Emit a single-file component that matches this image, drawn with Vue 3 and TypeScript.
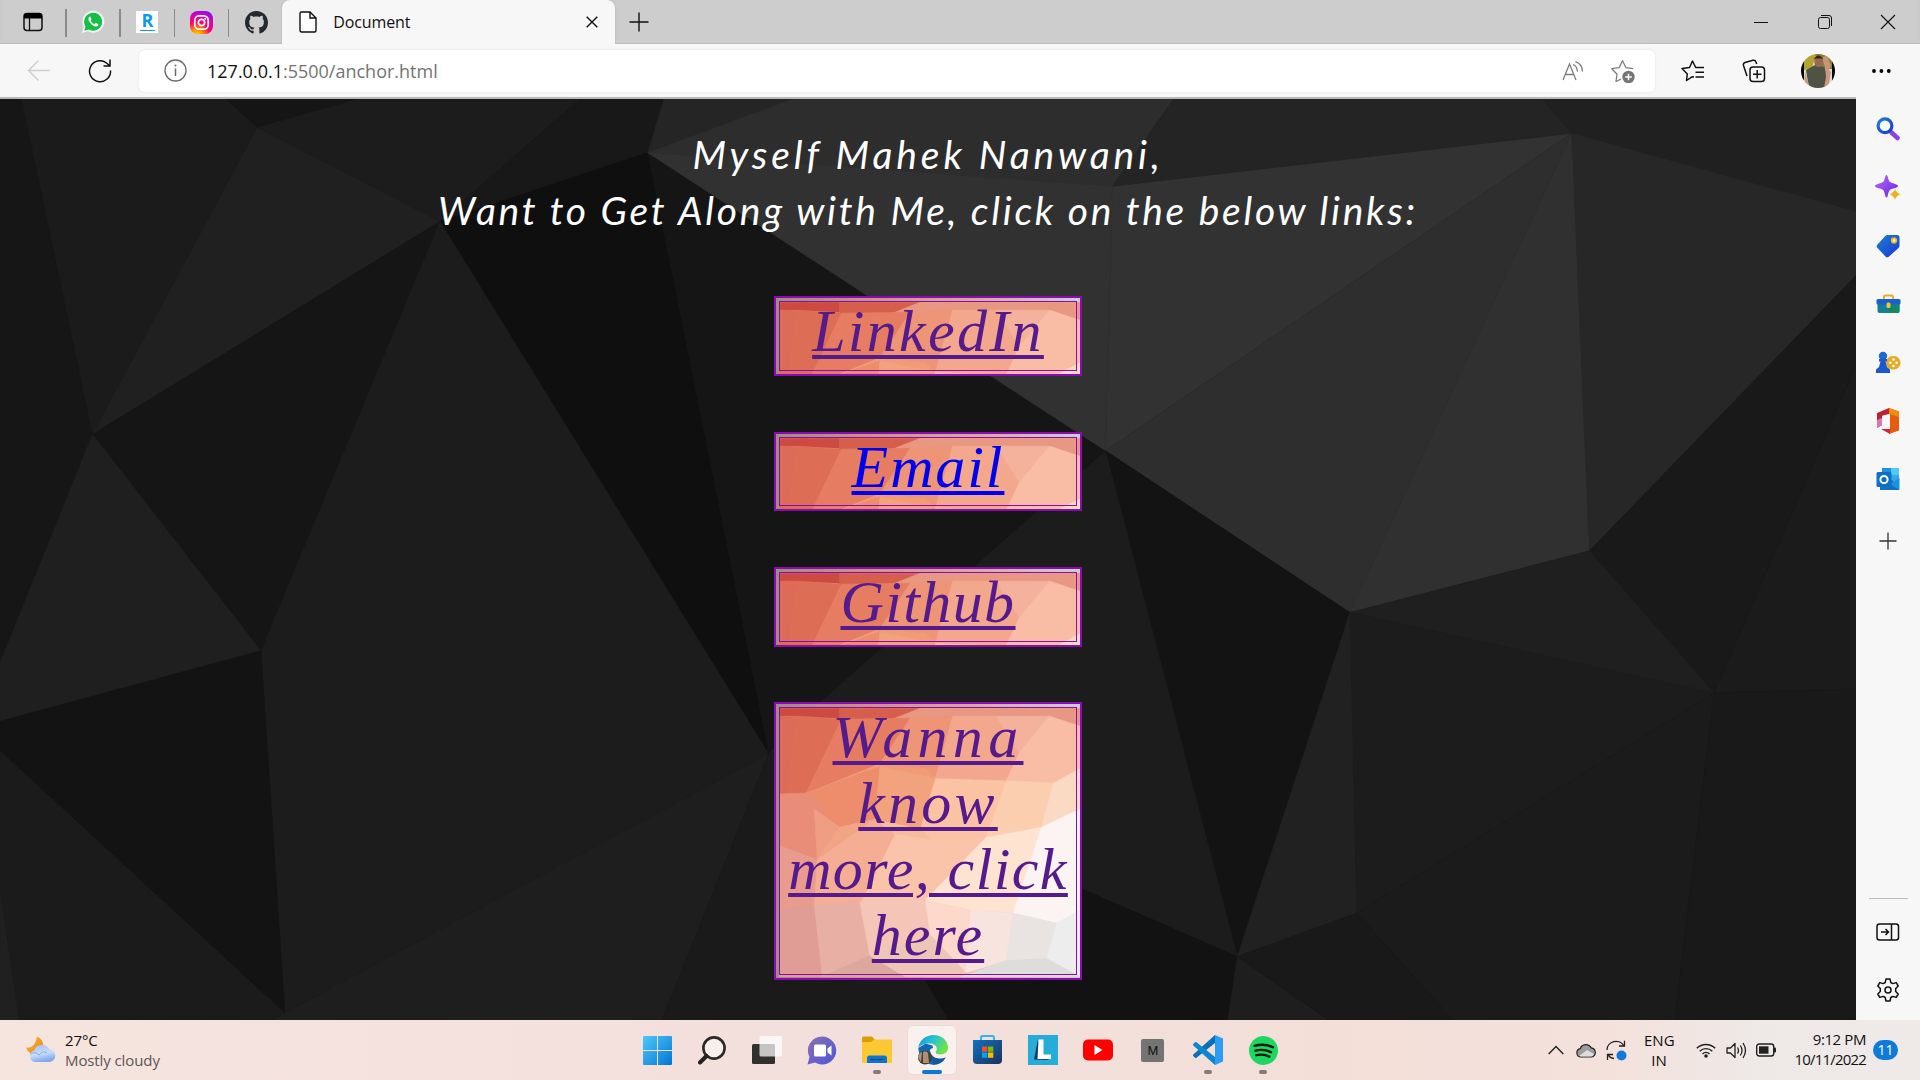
<script setup lang="ts">
interface LinkLine { text: string; spacing: number }
interface LinkCard { id: string; fresh?: boolean; height: number; gap: number; lines: LinkLine[] }

const cards: LinkCard[] = [
  { id: 'linkedin', height: 80, gap: 56, lines: [{ text: 'LinkedIn', spacing: 2.3 }] },
  { id: 'email', fresh: true, height: 79, gap: 56, lines: [{ text: 'Email', spacing: 1.9 }] },
  { id: 'github', height: 80, gap: 55, lines: [{ text: 'Github', spacing: 1.4 }] },
  {
    id: 'more', height: 278, gap: 0, lines: [
      { text: 'Wanna', spacing: 5.3 },
      { text: 'know', spacing: 3.2 },
      { text: 'more, click', spacing: 1.4 },
      { text: 'here', spacing: 2 },
    ],
  },
]

type Facet = [string, string]

const wall: Facet[] = [
  ['0,0 18,0 78,572 0,960', '#161617'],
  ['18,0 190,0 217,50 78,572', '#1b1b1b'],
  ['190,0 305,0 217,50', '#151515'],
  ['217,50 371,210 78,572', '#202020'],
  ['305,0 490,0 371,210 217,50', '#1c1c1c'],
  ['490,0 560,0 546,93 371,210', '#181818'],
  ['371,210 546,93 648,1115', '#0f0f0f'],
  ['371,210 78,572 220,940', '#151515'],
  ['371,210 220,940 240,1556 648,1115', '#1c1c1c'],
  ['78,572 220,940 0,1060 0,960', '#1f1f1f'],
  ['0,1060 220,940 240,1556 0,1110', '#131313'],
  ['0,1110 240,1556 230,1568 16,1568 0,1350', '#1b1b1b'],
  ['0,1350 16,1568 0,1568', '#202020'],
  ['240,1556 648,1115 558,1568 230,1568', '#1e1e1e'],
  ['648,1115 780,1500 800,1568 558,1568', '#1a1a1a'],
  ['546,93 932,600 690,1030 648,1115', '#151515'],
  ['546,93 560,0 670,0', '#252525'],
  ['546,93 670,0 990,0 938,150', '#2d2d2d'],
  ['546,93 938,150 932,600', '#313131'],
  ['938,150 1325,60 932,600', '#323232'],
  ['932,600 1325,60 1138,875', '#2e2e2e'],
  ['1325,60 1340,770 1138,875', '#303030'],
  ['990,0 1300,0 1325,60 938,150', '#242424'],
  ['1300,0 1568,0 1568,195 1325,60', '#202020'],
  ['1325,60 1568,195 1568,295 1340,770', '#272727'],
  ['1568,295 1340,770 1445,1012 1568,440', '#191919'],
  ['1568,440 1445,1012 1568,1005', '#1b1b1b'],
  ['932,600 1138,875 1043,1460', '#131313'],
  ['932,600 1043,1460 912,1345 648,1115 690,1030', '#1c1c1c'],
  ['648,1115 912,1345 780,1500', '#1d1d1d'],
  ['1138,875 1144,1386 1043,1460', '#212121'],
  ['1138,875 1340,770 1445,1012', '#1f1f1f'],
  ['1138,875 1445,1012 1144,1386', '#1c1c1c'],
  ['912,1345 1043,1460 1035,1568 800,1568 780,1500', '#121212'],
  ['1043,1460 1120,1568 1035,1568', '#1e1e1e'],
  ['1043,1460 1144,1386 1225,1568 1120,1568', '#191919'],
  ['1144,1386 1445,1012 1412,1568 1225,1568', '#1b1b1b'],
  ['1445,1012 1568,1005 1568,1568 1412,1568', '#191919'],
]

const warm: Facet[] = [
  ['0,0 60,0 60,10 18,8 0,8', '#cc4a41'],
  ['0,8 18,8 8,88 0,85', '#dc6c58'],
  ['60,0 140,0 110,12 60,12', '#d55f4c'],
  ['140,0 298,0 298,18 260,8 110,12', '#e89882'],
  ['18,8 62,11 27,84 8,88', '#de6d56'],
  ['62,11 130,10 100,55 27,84', '#e67d63'],
  ['130,10 172,8 155,68 100,55', '#ee9477'],
  ['100,55 145,60 155,70 92,100 60,72', '#f19c75'],
  ['172,8 215,8 238,44 225,72 155,70', '#f3a78c'],
  ['215,8 268,8 238,44', '#f4b19b'],
  ['268,8 298,18 298,60 272,74 225,72 238,44', '#f9bda6'],
  ['27,84 60,72 100,58 95,110 60,118 35,100', '#ed8d6b'],
  ['0,85 27,84 45,98 38,150 0,136', '#e98c78'],
  ['35,100 60,118 38,150', '#ee9e82'],
  ['60,118 95,110 38,150', '#f2a584'],
  ['100,58 155,70 140,120 95,110', '#f2a27c'],
  ['155,70 225,72 205,128 150,130 140,120', '#fbc3a3'],
  ['225,72 272,74 260,118 205,128', '#fbceb0'],
  ['272,74 298,60 298,100 260,118', '#fbdac3'],
  ['0,136 38,150 35,196 0,200', '#e99b8d'],
  ['38,150 95,110 115,125 80,195 35,196', '#f5ad93'],
  ['95,110 140,120 150,130 115,125', '#f7bd98'],
  ['115,125 150,130 205,128 145,190 80,195', '#fac4aa'],
  ['205,128 260,118 240,203 190,200 145,190', '#fee3d1'],
  ['260,118 298,100 298,200 275,213 232,203', '#fcf4f2'],
  ['0,200 35,195 43,266 0,266', '#df9d95'],
  ['35,195 80,192 90,245 43,266', '#e8afa4'],
  ['80,192 145,190 150,225 90,245', '#f5c5b8'],
  ['145,190 190,200 185,262 150,225', '#fcd9ca'],
  ['190,200 232,203 225,250 185,262', '#f7e4df'],
  ['232,203 275,213 265,248 225,250', '#e9e4e2'],
  ['275,213 298,200 298,266 265,248', '#ededee'],
  ['43,266 90,245 125,266', '#dca79c'],
  ['90,245 150,225 185,262 180,266 125,266', '#edc6b8'],
  ['180,266 225,250 265,248 298,266', '#dedddc'],
]
</script>

<template>
  <div class="screen">
    <header class="tabs">
      <div class="slot first">
        <svg width="20" height="20" viewBox="0 0 20 20"><rect x="1" y="1.500" width="18" height="17" rx="3" fill="none" stroke="#111" stroke-width="1.500" /><path d="M1 6.500V4a3 3 0 0 1 3-3h12a3 3 0 0 1 3 3v2.500z" fill="#000" /><path d="M6.500 6v12" stroke="#111" stroke-width="1.300" /></svg>
      </div>
      <div class="slot pin">
        <svg width="24" height="24" viewBox="0 0 24 24"><path d="M1 23 2.700 17A11 11 0 1 1 7 21.300z" fill="#f4f8f4" /><path d="M3.300 20.700 4.500 16.500A9 9 0 1 1 7.600 19.500z" fill="#12c143" /><path d="M8.500 6.800c-1.600 1-1.500 3.200.5 5.900 2.200 3 5.300 4.600 7.300 3.600 1.300-.7 1.400-2 .9-2.300l-2.300-1.100c-.4-.2-1.100 1.200-1.700 1.100-1.600-.6-2.800-1.900-3.500-3.200-.2-.5 1-1.100.8-1.600l-1-2.300c-.2-.4-.7-.4-1-.1z" fill="#fff" /></svg>
      </div>
      <div class="slot pin"><span class="r-icon">R<i /></span></div>
      <div class="slot pin">
        <svg width="23" height="23" viewBox="0 0 24 24"><defs><radialGradient id="ig" cx=".3" cy="1.050" r="1.150"><stop offset="0" stop-color="#ffd600" /><stop offset=".25" stop-color="#ff8a00" /><stop offset=".5" stop-color="#ff0169" /><stop offset=".75" stop-color="#e000b0" /><stop offset="1" stop-color="#7a10ff" /></radialGradient></defs><rect width="24" height="24" rx="8" fill="url(#ig)" /><rect x="5" y="5" width="14" height="14" rx="4.500" fill="none" stroke="#fff" stroke-width="1.800" /><circle cx="12" cy="12" r="3.300" fill="none" stroke="#fff" stroke-width="1.800" /><circle cx="16" cy="8" r="1" fill="#fff" /></svg>
      </div>
      <div class="slot pin">
        <svg width="23" height="23" viewBox="0 0 16 16"><path fill="#24292f" d="M8 0C3.580 0 0 3.580 0 8c0 3.540 2.290 6.530 5.470 7.590.4.070.55-.17.55-.38 0-.19-.01-.82-.01-1.490-2.010.37-2.530-.49-2.690-.94-.09-.23-.48-.94-.82-1.130-.28-.15-.68-.52-.01-.53.63-.01 1.080.58 1.230.82.72 1.210 1.870.87 2.330.66.070-.52.28-.87.51-1.070-1.780-.2-3.640-.89-3.640-3.950 0-.87.31-1.590.82-2.150-.08-.2-.36-1.020.08-2.120 0 0 .67-.21 2.200.82.64-.18 1.320-.27 2-.27s1.360.09 2 .27c1.530-1.040 2.200-.82 2.200-.82.44 1.100.16 1.920.08 2.120.51.56.82 1.270.82 2.150 0 3.070-1.870 3.750-3.650 3.950.29.25.54.73.54 1.480 0 1.070-.01 1.930-.01 2.200 0 .21.15.46.55.38A8.010 8.010 0 0 0 16 8c0-4.420-3.580-8-8-8z" /></svg>
      </div>
      <div class="active-tab">
        <svg width="18" height="22" viewBox="0 0 18 22"><path d="M1 2.500A1.500 1.500 0 0 1 2.500 1H11l6 6v12.500a1.500 1.500 0 0 1-1.500 1.500h-13A1.500 1.500 0 0 1 1 19.500zM11 1v6h6" fill="#fff" stroke="#111" stroke-width="1.400" /></svg>
        <span class="title">Document</span>
        <svg class="close" width="12" height="12" viewBox="0 0 12 12"><path d="M.7.7l10.600 10.600M11.300.7.7 11.300" stroke="#111" stroke-width="1.400" /></svg>
      </div>
      <svg class="new-tab" width="20" height="20" viewBox="0 0 20 20"><path d="M10 .5v19M.5 10h19" stroke="#111" stroke-width="1.400" /></svg>
      <div class="window-controls">
        <svg width="16" height="16" viewBox="0 0 16 16"><path d="M1 8.500h14" stroke="#111" /></svg>
        <svg width="16" height="16" viewBox="0 0 16 16"><rect x="1.500" y="3.500" width="11" height="11" rx="2" fill="none" stroke="#111" /><path d="M4 1.500h8a2.500 2.500 0 0 1 2.500 2.500v8" fill="none" stroke="#111" /></svg>
        <svg width="16" height="16" viewBox="0 0 16 16"><path d="M1 1l14 14M15 1 1 15" stroke="#111" stroke-width="1.100" /></svg>
      </div>
    </header>

    <div class="toolbar">
      <svg class="back" width="24" height="24" viewBox="0 0 24 24"><path d="M23 11.500H1.500M11.500 1.500 1.500 11.500l10 10" fill="none" stroke="#cfcfcf" stroke-width="1.500" /></svg>
      <svg class="reload" width="24" height="24" viewBox="0 0 24 24"><path d="M22.500 11.500A10.500 10.500 0 1 1 18.500 4l3.500 3M22 .5V7h-6.500" fill="none" stroke="#111" stroke-width="1.500" /></svg>
      <div class="address">
        <svg width="23" height="23" viewBox="0 0 23 23"><circle cx="11.500" cy="11.500" r="10.500" fill="none" stroke="#6b6b6b" stroke-width="1.300" /><path d="M11.500 9.500v7.500" stroke="#6b6b6b" stroke-width="1.500" /><circle cx="11.500" cy="6.500" r="1" fill="#6b6b6b" /></svg>
        <span class="url"><b>127.0.0.1</b>:5500/anchor.html</span>
        <svg class="aloud" width="22" height="20" viewBox="0 0 22 20"><path d="M1 19 7.500 3 14 19M3.200 13.500h8.600M11 3.500q4 1.500 4.500 7M13.500.7q6.500 2 7 9.800" fill="none" stroke="#7d7d7d" stroke-width="1.300" /></svg>
        <svg class="star" width="24" height="24" viewBox="0 0 24 24"><path d="M10 20 5 22.500 6 15.300.8 9.700l7.200-1L11.500 1.700 15 8.700l7.200 1" fill="none" stroke="#7d7d7d" stroke-width="1.300" stroke-linejoin="round" /><circle cx="17.500" cy="18" r="6.200" fill="#757575" /><path d="M17.500 14.700v6.600M14.200 18h6.600" stroke="#fff" stroke-width="1.400" /></svg>
      </div>
      <svg class="fav" width="24" height="24" viewBox="0 0 24 24"><path d="M13 18 11 17.800 5.500 21.500 6.300 15 1 9.500l7.500-1L11.500 2l3.200 6.500H23M14.500 13.200H23M14.500 18H23" fill="none" stroke="#111" stroke-width="1.500" stroke-linejoin="round" /></svg>
      <svg class="coll" width="24" height="24" viewBox="0 0 24 24"><rect x="8" y="8" width="14.500" height="14.500" rx="3" fill="none" stroke="#111" stroke-width="1.500" /><path d="M15.200 11v8.500M11 15.200h8.500M5 17 1.500 6.500A2.500 2.500 0 0 1 3 3.500l8-2.200a2.500 2.500 0 0 1 3 1.700l.7 2" fill="none" stroke="#111" stroke-width="1.500" /></svg>
      <svg class="avatar" width="34" height="34" viewBox="0 0 34 34"><defs><clipPath id="av"><circle cx="17" cy="17" r="17" /></clipPath></defs><g clip-path="url(#av)"><path d="M0 0h34v34H0z" fill="#ded5cc" /><path d="M3 0h12l-4 14-8 2z" fill="#b3a52c" /><path d="M14 0h17v15H18z" fill="#85812e" /><path d="M21 4l5-3 4 11-4 7z" fill="#c99578" /><path d="M5 16l9-5 9 2 4 8-3 13H8z" fill="#4e5346" /><path d="M4 18l5 16H3zM24 12l6 6-3 16h-4l2-11z" fill="#cb977e" /><ellipse cx="17.500" cy="7.500" rx="4.300" ry="5.500" fill="#9c6950" /><path d="M12.500 5.500q5-8 10 0l-2-1h-6z" fill="#332620" /><path d="M0 0h3v34H0zM31 0h3v34h-3z" fill="#050505" /></g></svg>
      <svg class="dots" width="24" height="24" viewBox="0 0 24 24"><circle cx="5" cy="12" r="1.900" /><circle cx="12.400" cy="12" r="1.900" /><circle cx="19.800" cy="12" r="1.900" /></svg>
    </div>

    <div class="middle">
      <main class="page">
        <svg class="wall" viewBox="0 0 1568 1568" preserveAspectRatio="none">
          <rect width="1568" height="1568" fill="#1c1c1c" />
          <polygon v-for="f in wall" :key="f[0]" :points="f[0]" :fill="f[1]" :stroke="f[1]" stroke-width=".6" />
        </svg>
        <div class="content">
          <h1><span class="l1">Myself Mahek Nanwani,</span><span class="l2">Want to Get Along with Me, click on the below links:</span></h1>
          <a v-for="c in cards" :key="c.id" class="card" :class="{ fresh: c.fresh }" :style="{ height: c.height + 'px', marginBottom: c.gap + 'px' }">
            <span class="texture">
              <svg viewBox="0 0 298 266" width="301" height="269">
                <rect width="298" height="266" fill="#f6b79f" />
                <polygon v-for="f in warm" :key="f[0]" :points="f[0]" :fill="f[1]" :stroke="f[1]" stroke-width=".7" />
              </svg>
            </span>
            <span class="frame">
              <span v-for="l in c.lines" :key="l.text" class="line"><u :style="{ letterSpacing: l.spacing + 'px' }">{{ l.text }}</u></span>
            </span>
          </a>
        </div>
      </main>

      <aside class="sidebar">
        <div class="side"><svg width="24" height="24" viewBox="0 0 24 24"><defs><linearGradient id="sp" x2="1" y2="1"><stop stop-color="#b36bff" /><stop offset="1" stop-color="#6b21e0" /></linearGradient><linearGradient id="sb" x2="1" y2="1"><stop stop-color="#1d80d0" /><stop offset="1" stop-color="#1a35d8" /></linearGradient></defs><path d="M15.500 15.500l6 5.500" stroke="#8a45e0" stroke-width="4.500" stroke-linecap="round" /><circle cx="9" cy="8.800" r="6.900" fill="#f7fbff" stroke="url(#sb)" stroke-width="3.200" /></svg></div>
        <div class="side"><svg width="26" height="26" viewBox="0 0 26 26"><path d="M11.500 1c1.500 0 1.500 5 3.200 6.800S23 10 23 12s-6.600 2.400-8.300 4.200-1.700 7.300-3.200 7.300-1.500-5.500-3.200-7.300S0 14 0 12s6.600-2.400 8.300-4.200S10 1 11.500 1z" fill="url(#sp)" /><path d="M20 15q1.500 4 5.500 5.300-4 1.200-5.500 5.200-1.500-4-5.500-5.200 4-1.300 5.500-5.300z" fill="#eeb020" /></svg></div>
        <div class="side"><svg width="24" height="24" viewBox="0 0 24 24"><path d="M11 1h10a2.500 2.500 0 0 1 2.500 2.500V12a3 3 0 0 1-1 2L13 22.500a2.500 2.500 0 0 1-3.500 0L1.500 14a2.500 2.500 0 0 1 0-3.500L9.500 1.700z" fill="url(#sb)" /><circle cx="18" cy="6.500" r="2.300" fill="#fff" stroke="#f2b71d" stroke-width="1.700" /></svg></div>
        <div class="side"><svg width="25" height="20" viewBox="0 0 25 20"><path d="M8 6V3a1.500 1.500 0 0 1 1.500-1.500h6A1.500 1.500 0 0 1 17 3v3" fill="none" stroke="#e6ad24" stroke-width="2" /><path d="M1.500 8h22v9a2 2 0 0 1-2 2h-18a2 2 0 0 1-2-2z" fill="#167f94" /><path d="M12 8h11.500v9a2 2 0 0 1-2 2H12z" fill="#168669" /><rect x=".5" y="5" width="24" height="5.500" rx="1.500" fill="#1760d0" /><rect x="10.500" y="8.500" width="4" height="5.500" rx="1.500" fill="#f2c33b" /></svg></div>
        <div class="side"><svg width="26" height="22" viewBox="0 0 26 22"><rect x="11" y="5" width="14.500" height="13.500" rx="6.500" fill="#e9aa25" /><circle cx="8" cy="5" r="4.200" fill="#1f68d4" /><path d="M4 8h8v2.500h-1.500l1.500 5.500 3 2.500V22H1v-3.500L4 16l1.500-5.500H4z" fill="#1c59cf" /><g fill="#fff"><circle cx="18.500" cy="8.500" r="1.300" /><circle cx="18.500" cy="15" r="1.300" /><circle cx="15.300" cy="11.700" r="1.300" /><circle cx="21.700" cy="11.700" r="1.300" /></g></svg></div>
        <div class="side"><svg width="24" height="28" viewBox="0 0 24 28"><path d="M13 1 1 6v15l5-3V9l7-2z" fill="#bd2233" /><path d="M1 13v8l5-3v-7z" fill="#dc77b5" /><path d="M13 1l10 3.500v19L13 27V22z" fill="#e85b0c" /><path d="M13 1l10 3.500V10L13 7z" fill="#f18b0a" /><path d="M5 22h9V7v20z" fill="#d5243c" /><path d="M6 9l8-2v15H6z" fill="#f7f7f7" /></svg></div>
        <div class="side"><svg width="24" height="24" viewBox="0 0 24 24"><path d="M6 1h17v16H6z" fill="#50c9f6" /><path d="M6 1h9v7H6z" fill="#1e90dc" /><path d="M14 8h9v7h-9z" fill="#36a9e8" /><path d="M4 23V13h12l7 8v2z" fill="#1472bd" /><path d="M23.500 11v12L14 17z" fill="#1b94e0" /><rect x=".5" y="5" width="15" height="15" rx="1.500" fill="#0c6fc8" /><circle cx="8" cy="12.500" r="3.600" fill="none" stroke="#fff" stroke-width="2" /></svg></div>
        <svg class="side-plus" width="18" height="18" viewBox="0 0 18 18"><path d="M9 .5v17M.5 9h17" stroke="#333" stroke-width="1.300" /></svg>
        <div class="side-foot">
          <svg width="24" height="18" viewBox="0 0 24 18"><rect x="1" y="1" width="21.500" height="16" rx="2.500" fill="none" stroke="#111" stroke-width="1.500" /><path d="M15.500 1v16M5 9h7M9.500 6l3 3-3 3" fill="none" stroke="#111" stroke-width="1.500" /></svg>
          <svg width="24" height="24" viewBox="0 0 24 24"><path d="M10 1h4l.8 3.500 2 1.100 3.400-1 2 3.400L19.700 10.500v3l2.500 2.500-2 3.400-3.400-1-2 1.100L14 23h-4l-.8-3.500-2-1.100-3.400 1L1.800 16l2.500-2.500v-3L1.800 8l2-3.400 3.400 1 2-1.100z" fill="none" stroke="#111" stroke-width="1.500" stroke-linejoin="round" /><circle cx="12" cy="12" r="3" fill="none" stroke="#111" stroke-width="1.500" /></svg>
        </div>
      </aside>
    </div>

    <footer class="taskbar">
      <div class="weather">
        <svg width="30" height="27" viewBox="0 0 30 27"><defs><linearGradient id="mn" y2="1"><stop stop-color="#f4b535" /><stop offset="1" stop-color="#ee8a1c" /></linearGradient><linearGradient id="cl" y2="1" x2=".3"><stop stop-color="#a7c2f2" /><stop offset=".6" stop-color="#c7dcfa" /><stop offset="1" stop-color="#84abed" /></linearGradient></defs><path d="M11 .5q7 3 6 11-3 7-10 6.500Q2 17 0 11.500q9 1.500 11-11z" fill="url(#mn)" /><path d="M9 26a6 6 0 0 1-1-11.500 8.500 8.500 0 0 1 15.500-1A6.300 6.300 0 0 1 24 26z" fill="url(#cl)" /><path d="M4 18q5-3 9 1 4-5 8-2" fill="none" stroke="#8caeea" stroke-width="1" /></svg>
        <p><span class="temp">27°C</span><span class="cond">Mostly cloudy</span></p>
      </div>

      <div class="apps">
        <div class="app"><svg width="29" height="29" viewBox="0 0 29 29"><defs><linearGradient id="wn" x2="1" y2="1"><stop stop-color="#4cc8fa" /><stop offset="1" stop-color="#0575d4" /></linearGradient></defs><path d="M1 0h13v14H0V1a1 1 0 0 1 1-1zM15 0h13a1 1 0 0 1 1 1v13H15zM0 15h14v14H1a1 1 0 0 1-1-1zM15 15h14v13a1 1 0 0 1-1 1H15z" fill="url(#wn)" /></svg></div>
        <div class="app"><svg width="28" height="29" viewBox="0 0 28 29"><circle cx="16" cy="12" r="10.600" fill="#f7efec" stroke="#2b2827" stroke-width="2.600" /><path d="M8.500 20 2 26.500" stroke="#222" stroke-width="4" stroke-linecap="round" /></svg></div>
        <div class="app"><svg width="30" height="29" viewBox="0 0 30 29"><rect x="0" y="8" width="23" height="20" rx="1.500" fill="#30302e" /><rect x="7.500" width="22.500" height="20.500" rx="1.500" fill="#fff" fill-opacity=".72" /></svg></div>
        <div class="app"><svg width="30" height="29" viewBox="0 0 30 29"><defs><linearGradient id="ch" x2="1" y2="1"><stop stop-color="#8a70b5" /><stop offset="1" stop-color="#4d55d8" /></linearGradient></defs><path d="M15 .5a14 14 0 1 1-7 26L.5 28.500 2.500 21A14 14 0 0 1 15 .5z" fill="url(#ch)" /><rect x="7" y="8.500" width="12" height="12" rx="1.500" fill="#fff" /><path d="M20.500 12.500l4-3v10l-4-3z" fill="#fff" /></svg></div>
        <div class="app run"><svg width="30" height="28" viewBox="0 0 30 28"><path d="M0 2a1.500 1.500 0 0 1 1.500-1.500H10L13 4l-2 3H0z" fill="#dc9c08" /><path d="M0 6h9l3-2.500h18V27H1.500A1.500 1.500 0 0 1 0 25.500z" fill="#fcc832" /><path d="M5 27v-5a2.500 2.500 0 0 1 2.500-2.500h15A2.500 2.500 0 0 1 25 22v5z" fill="#0c74cd" /><path d="M8.500 23.500h13" stroke="#14487c" /></svg></div>
        <div class="app focus"><svg width="30" height="30" viewBox="0 0 30 30"><defs><linearGradient id="ed" x2="1" y2=".5"><stop stop-color="#1592d0" /><stop offset=".5" stop-color="#27c3d4" /><stop offset="1" stop-color="#6ee545" /></linearGradient></defs><path d="M.2 13C1 21 6 29.700 15 29.700c6 0 10-3 12.500-7.200-4 2.500-10 1.500-11-3.500l-2-8.500-7-2z" fill="#1168b5" /><path d="M.2 13C1.500 5 8 0 15.500 0 24 0 30 6 30 12.500c0 5-4 7-7.500 7-3 0-5-1-5-2.300 0-1 1.200-1.500 1.200-3.700 0-2.500-3-5-7.200-5C6 8.500 2 10.500.2 13z" fill="url(#ed)" /><path d="M12 15c2-3 6-3 6.500-.5 0 1-1.300 2-1.200 3.200.5 2.500 6.500 3.500 11 .8-2 5-7 5-10 4.500-4-.5-6-4.500-6.300-8z" fill="#fbf0ee" /><path d="M14 20q4 6 13.700 2.500Q24 29.700 15 29.700z" fill="#1259a0" /><circle cx="7" cy="22.500" r="7" fill="#3f3f34" /><path d="M5 17q3-2 5 1l1 10H5z" fill="#b08d76" /><path d="M0 22q2-5 4-5l-1 10z" fill="#ad967b" /></svg></div>
        <div class="app"><svg width="29" height="30" viewBox="0 0 29 30"><defs><linearGradient id="st" y2="1"><stop stop-color="#1172bd" /><stop offset="1" stop-color="#1b315e" /></linearGradient></defs><path d="M8 6V2.500A1.500 1.500 0 0 1 9.500 1h10A1.500 1.500 0 0 1 21 2.500V6" fill="none" stroke="#30b5ed" stroke-width="2" /><path d="M0 5h29v20a4 4 0 0 1-4 4H4a4 4 0 0 1-4-4z" fill="url(#st)" /><path d="M9 11.500h5.300v5.300H9z" fill="#f25022" /><path d="M15 11.500h5.300v5.300H15z" fill="#7fba00" /><path d="M9 17.500h5.300v5.300H9z" fill="#00a4ef" /><path d="M15 17.500h5.300v5.300H15z" fill="#ffb900" /></svg></div>
        <div class="app"><svg width="30" height="30" viewBox="0 0 30 30"><path d="M0 0h30v30H0z" fill="#25acd9" /><path d="M10 4 6 24.500l16 .5-9-3z" fill="#123a63" /><path d="M10.500 4.500h5v15h7.500V24H9.500z" fill="#fff" /></svg></div>
        <div class="app"><svg width="30" height="22" viewBox="0 0 30 22"><rect y=".5" width="30" height="21" rx="5" fill="#f00" /><path d="M11.500 6v10l8-5z" fill="#fff" /></svg></div>
        <div class="app"><span class="m-icon">M</span></div>
        <div class="app run"><svg width="30" height="30" viewBox="0 0 30 30"><path d="M22 0 30 3.500v23L22 30z" fill="#2a9df4" /><path d="M22 0v8L3.500 22.700q-.8.500-1.500 0L.3 21q-.6-.8 0-1.600z" fill="#0870b8" /><path d="M22 30v-8L3.500 7.300q-.8-.5-1.500 0L.3 9q-.6.800 0 1.600z" fill="#0e85ce" /></svg></div>
        <div class="app run"><svg width="29" height="29" viewBox="0 0 29 29"><circle cx="14.500" cy="14.500" r="14.500" fill="#1ed760" /><path d="M5.500 9.800q10-2.800 18.500 1.500M6.500 14.700q8-2.200 15.500 1.500M7.300 19.200q7-1.700 13 1.400" fill="none" stroke="#0c1a10" stroke-width="2.400" stroke-linecap="round" /></svg></div>
      </div>

      <div class="tray">
        <svg class="chev" width="16" height="10" viewBox="0 0 16 10"><path d="M.7 9 8 1.500 15.300 9" fill="none" stroke="#222" stroke-width="1.400" /></svg>
        <svg class="cloud" width="20" height="15" viewBox="0 0 20 15"><path d="M5 14a4.200 4.200 0 0 1-.8-8.300 6 6 0 0 1 11-.8A4.600 4.600 0 0 1 15.500 14z" fill="#9b9b9b" stroke="#222" stroke-width="1.200" /><path d="M3 13l8-6 7 4q-1 2.500-3 2.500H5z" fill="#ddd" /></svg>
        <svg class="sync" width="21" height="21" viewBox="0 0 21 21"><path d="M1 10a9 8.500 0 0 1 17-4M18.500.7V6H13M8 18.500Q4 18 2 14.800M1.500 20v-5.500H7" fill="none" stroke="#222" stroke-width="1.300" /><circle cx="15.500" cy="15.500" r="5" fill="#0f7ad8" /></svg>
        <p class="lang"><span>ENG</span><span>IN</span></p>
        <svg class="wifi" width="20" height="15" viewBox="0 0 20 15"><path d="M.8 5.300a13 13 0 0 1 18.400 0M3.700 8.200a9 9 0 0 1 12.600 0M6.500 11a5 5 0 0 1 7 0" fill="none" stroke="#222" stroke-width="1.400" /><circle cx="10" cy="13" r="1.800" fill="#222" /></svg>
        <svg class="sound" width="21" height="17" viewBox="0 0 21 17"><path d="M1 6h3.500L9 1.500v14L4.500 11H1z" fill="none" stroke="#222" stroke-width="1.300" stroke-linejoin="round" /><path d="M11.500 5.500q2 3 0 6M14.300 3.500q3.500 5 0 10M17 1q5 7.500 0 15" fill="none" stroke="#222" stroke-width="1.300" /></svg>
        <svg class="batt" width="20" height="14" viewBox="0 0 20 14"><rect x=".7" y="1" width="17" height="12" rx="2.500" fill="none" stroke="#222" stroke-width="1.400" /><rect x="3" y="3.300" width="9.500" height="7.400" fill="#222" /><path d="M18 4.500h1a1 1 0 0 1 1 1v3a1 1 0 0 1-1 1h-1z" fill="#222" /></svg>
        <p class="clock"><span>9:12 PM</span><span class="date">10/11/2022</span></p>
        <span class="badge">11</span>
      </div>
    </footer>
  </div>
</template>

<style>
body { margin: 0; overflow: hidden; }
</style>

<style scoped>
.screen { width: 1920px; height: 1080px; display: flex; flex-direction: column; overflow: hidden; font-family: "Segoe UI", "Open Sans", "Noto Sans", sans-serif; color: #111; }
svg { display: block; flex: none; }
p { margin: 0; }

.tabs { height: 44px; flex: none; display: flex; background: #cdcdcd; box-shadow: inset 0 -1px 1px #bdbdbd; }
.slot { height: 44px; box-sizing: border-box; display: flex; align-items: center; justify-content: center; position: relative; }
.first { width: 65px; }
.pin { width: 54.3px; padding-left: 2px; }
.pin::before { content: ""; position: absolute; left: 0; top: 9px; height: 28px; width: 1.500px; background: #8a8a8a; }
.r-icon { width: 22px; height: 22px; background: #fff; color: #0d97f5; font: 700 18px/19px "Open Sans", sans-serif; text-align: center; }
.r-icon i { display: block; width: 15px; height: 1px; margin: 0 auto; border-radius: 2px; background: #0d97f5; }
.active-tab { width: 333px; box-sizing: border-box; padding: 0 17px 0 17px; background: #f7f7f7; border-radius: 8px 8px 0 0; display: flex; align-items: center; box-shadow: 0 0 2px #aaa; clip-path: inset(0 -3px 0 -3px); }
.title { margin-left: 16px; font-size: 16px; letter-spacing: -.1px; }
.close { margin-left: auto; }
.new-tab { margin: 12px 0 0 14px; }
.window-controls { margin-left: auto; display: flex; align-items: center; gap: 47.5px; padding-right: 24px; }

.toolbar { height: 53px; flex: none; display: flex; align-items: center; background: #f7f7f7; }
.back { margin-left: 27px; }
.reload { margin-left: 37px; }
.address { margin-left: 27px; width: 1516px; height: 42px; box-sizing: border-box; padding: 0 20px 0 24.500px; border-radius: 6px; background: #fff; box-shadow: 0 0 3px #e4e4e4; display: flex; align-items: center; }
.url { margin-left: 20.500px; font-size: 18px; letter-spacing: 0; color: #737373; }
.url b { font-weight: 400; color: #111; }
.aloud { margin-left: auto; }
.star { margin-left: 27px; }
.fav { margin-left: 26px; }
.coll { margin-left: 37px; }
.avatar { margin-left: 35px; }
.dots { margin-left: 34px; }

.middle { flex: 1; display: flex; min-height: 0; background: #f7f7f7; }
.page { width: 1856px; height: 923px; box-sizing: border-box; border-top: 2px solid #b9b9b9; position: relative; overflow: hidden; background: #1c1c1c; }
.wall { position: absolute; left: 0; top: -1px; width: 1860px; height: 922px; }
.content { position: relative; display: flex; flex-direction: column; align-items: center; }
h1 { margin: 27px 0 0; height: 113px; padding-bottom: 57px; color: #fff; font: italic 400 39px/56px "Bradley Hand ITC", "Lato", sans-serif; text-align: center; }
h1 span { display: block; white-space: nowrap; }
.l1 { letter-spacing: 3.9px; }
.l2 { letter-spacing: 2.7px; }
.card { position: relative; width: 308px; box-sizing: border-box; border: 2px solid #8a0bb5; padding: 3px; color: #551a8b; background: linear-gradient(90deg, #a08c80, #cf9280 30%, #d9aa9c 65%, #cdcdcd); }
.fresh { color: #0000ee; }
.texture { position: absolute; left: 3px; top: 4px; right: 0; bottom: 0; overflow: hidden; }
.frame { position: relative; display: block; height: 100%; box-sizing: border-box; border: 1px solid #8a0bb5; text-align: center; }
.line { position: relative; top: -4.5px; display: block; height: 66px; font: italic 400 60px/66px "Lucida Calligraphy", "Liberation Serif", serif; white-space: nowrap; }
.line u { text-decoration: underline; text-decoration-thickness: 4px; text-underline-offset: 4px; }

.sidebar { width: 64px; display: flex; flex-direction: column; align-items: center; background: #f7f7f7; padding-top: 3px; box-sizing: border-box; }
.side { height: 58.3px; display: flex; align-items: center; }
.side-plus { margin-top: 24px; }
.side-foot { margin-top: auto; width: 39px; border-top: 1px solid #bdbdbd; padding-top: 24px; height: 97px; display: flex; flex-direction: column; align-items: center; gap: 37px; }

.taskbar { height: 60px; flex: none; display: flex; position: relative; background: linear-gradient(90deg, #f6e4df, #f3e0dd 40%, #f3dfd8 70%, #f4e1dc 84%, #eee9e7 92%, #efeae8); }
.weather { display: flex; padding: 16px 0 0 26px; width: 603.500px; box-sizing: content-box; }
.weather p { margin: -6px 0 0 9px; font-size: 15px; line-height: 20px; letter-spacing: -.1px; }
.weather span, .lang span, .clock span { display: block; white-space: nowrap; }
.cond { color: #5d5654; }
.apps { display: flex; }
.app { width: 55.1px; height: 60px; display: flex; align-items: center; justify-content: center; position: relative; }
.app svg { position: relative; }
.run::after, .focus::after { content: ""; position: absolute; top: 50px; left: 23.500px; width: 8px; height: 4px; border-radius: 2px; background: #85797a; }
.focus::before { content: ""; position: absolute; top: 6px; left: 3.500px; width: 48px; height: 48px; border-radius: 5px; background: #faf1ef; box-shadow: 0 0 1px 1px #eadcd8; }
.focus::after { left: 17.500px; width: 20px; background: #0b78d7; }
.m-icon { width: 23px; height: 23px; border-radius: 2px; background: #747474; font: 13px/23px "Liberation Sans", sans-serif; text-align: center; color: #111; }
.tray { margin-left: auto; display: flex; align-items: center; padding-right: 22px; font-size: 15px; line-height: 20px; }
.cloud { margin-left: 12px; }
.sync { margin-left: 10px; }
.lang { width: 30px; margin: 0 0 1px 17px; text-align: center; }
.wifi { margin-left: 22px; }
.sound { margin-left: 10px; }
.batt { margin-left: 9px; }
.clock { width: 78px; margin: 0 0 2px 12px; display: flex; flex-direction: column; align-items: flex-end; letter-spacing: -.4px; }
.date { letter-spacing: -.8px; }
.badge { width: 25px; height: 20px; margin-left: 7px; border-radius: 10px; background: #0f7ad8; color: #fff; font-size: 14px; text-align: center; }
</style>
